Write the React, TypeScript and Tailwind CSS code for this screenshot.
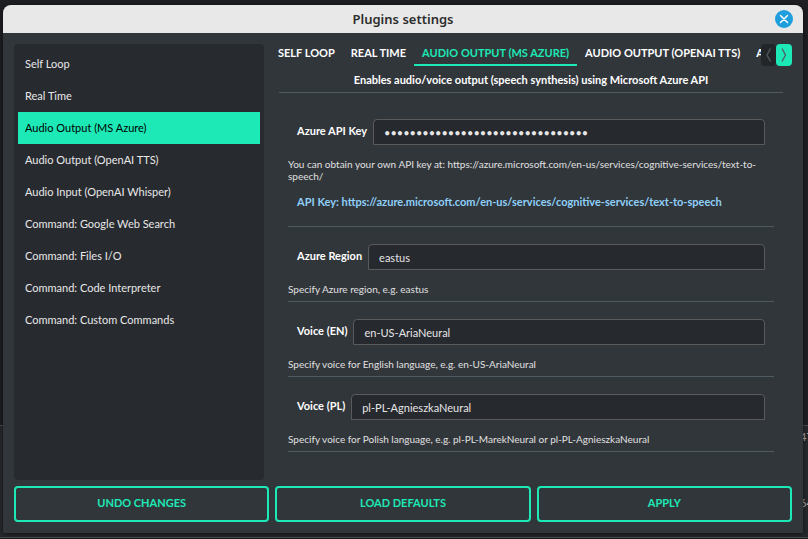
import React from "react";

const plugins = [
  "Self Loop",
  "Real Time",
  "Audio Output (MS Azure)",
  "Audio Output (OpenAI TTS)",
  "Audio Input (OpenAI Whisper)",
  "Command: Google Web Search",
  "Command: Files I/O",
  "Command: Code Interpreter",
  "Command: Custom Commands",
];

const selected = "Audio Output (MS Azure)";

type FieldProps = {
  id: string;
  label: string;
  value: string;
  hint: string;
  type?: string;
  children?: React.ReactNode;
};

function Field({ id, label, value, hint, type = "text", children }: FieldProps) {
  return (
    <section className="border-b border-[#4f5b62] pb-1.5">
      <div className="flex items-center gap-1.5 px-[9px] pt-[17px]">
        <label htmlFor={id} className="shrink-0 pb-0.5 font-bold">
          {label}
        </label>
        <input
          id={id}
          type={type}
          defaultValue={value}
          className="h-[26px] min-w-0 flex-1 rounded-t border border-[#5a5a5a] bg-[#26292e] px-2.5 text-[#e6e6e6] outline-none"
        />
      </div>
      <p className="pt-[13px] text-[10px] leading-3 text-[#e0e0e0]">{hint}</p>
      {children}
    </section>
  );
}

function Chevron({ d }: { d: string }) {
  return (
    <svg viewBox="0 0 16 22" className="h-[22px] w-4" fill="none" stroke="#4f5b62" strokeWidth="1.3">
      <path d={d} />
    </svg>
  );
}

export default function App() {
  return (
    <div className="relative h-screen overflow-hidden bg-[#1d1f22] font-['Lato',sans-serif] text-[11px] leading-4 text-white">
      <div className="flex h-full flex-col">
        <div className="flex-1" />
        <div className="flex h-[113px] flex-col items-end justify-between border-y border-[#4a4d50] bg-[#26292c] pt-[3px] pb-[26px] text-[#b0b0b0]">
          <span className="w-2">47</span>
          <span className="w-2">64</span>
        </div>
        <div className="h-px bg-[#1b1c1e]" />
      </div>

      <div
        role="dialog"
        aria-label="Plugins settings"
        className="absolute top-[5px] right-[5px] bottom-[6px] left-[3px] flex flex-col overflow-hidden rounded-t-lg bg-[#31363b] shadow-[0_1px_5px_rgba(0,0,0,0.6)]"
      >
        <header className="flex h-7 shrink-0 items-center bg-[#e8e8e8] pr-2.5 pl-7">
          <h1 className="flex-1 text-center font-['Noto_Sans',sans-serif] text-[13px] font-semibold text-[#2d2d2d]">
            Plugins settings
          </h1>
          <button aria-label="Close" className="flex size-[18px] items-center justify-center rounded-full bg-[#1f9ede]">
            <svg viewBox="0 0 18 18" className="size-[18px]" stroke="#fff" strokeWidth="1.5" strokeLinecap="round">
              <path d="M5.5 5.5l7 7M12.5 5.5l-7 7" />
            </svg>
          </button>
        </header>

        <main className="flex min-h-0 flex-1 flex-col gap-1.5 p-[11px]">
          <div className="flex min-h-0 flex-1 gap-1.5">
            <ul className="w-[250px] shrink-0 rounded bg-[#272a2f] p-1">
              {plugins.map((name) => (
                <li key={name}>
                  <button
                    className={
                      name === selected
                        ? "h-8 w-full bg-[#1de9b6] px-[7px] text-left text-black"
                        : "h-8 w-full px-[7px] text-left text-[#e8e8e8]"
                    }
                  >
                    {name}
                  </button>
                </li>
              ))}
            </ul>

            <div className="flex min-w-0 flex-1 flex-col">
              <div className="flex h-[22px] shrink-0">
                <nav className="flex min-w-0 flex-1 overflow-hidden font-bold whitespace-nowrap">
                  <button className="shrink-0 border-b-2 border-transparent px-2 pb-0.5">SELF LOOP</button>
                  <button className="shrink-0 border-b-2 border-transparent px-2 pb-0.5">REAL TIME</button>
                  <button className="shrink-0 border-b-2 border-[#1de9b6] px-2 pb-0.5 text-[#1de9b6]">
                    AUDIO OUTPUT (MS AZURE)
                  </button>
                  <button className="shrink-0 border-b-2 border-transparent px-2 pb-0.5">
                    AUDIO OUTPUT (OPENAI TTS)
                  </button>
                  <button className="shrink-0 border-b-2 border-transparent px-2 pb-0.5">
                    AUDIO INPUT (OPENAI WHISPER)
                  </button>
                </nav>
                <button aria-label="Previous tabs" className="w-[15px] overflow-hidden rounded bg-[#232629]">
                  <Chevron d="M9.5 4.5L6 11l3.5 6.5" />
                </button>
                <button aria-label="Next tabs" className="w-4 rounded bg-[#1de9b6]">
                  <Chevron d="M6 4.5L9.5 11 6 17.5" />
                </button>
              </div>

              <div className="px-[9px]">
                <p className="border-b border-[#4f5b62] pt-1.5 pb-1 text-center font-bold">
                  Enables audio/voice output (speech synthesis) using Microsoft Azure API
                </p>
                <div className="px-[9px] pt-[9px]">
                  <Field
                    id="api-key"
                    label="Azure API Key"
                    type="password"
                    value="0123456789abcdef0123456789abcdef"
                    hint="You can obtain your own API key at: https://azure.microsoft.com/en-us/services/cognitive-services/text-to-speech/"
                  >
                    <p className="px-[9px] pt-3 pb-2.5 font-bold">
                      <a
                        className="text-[#8fd0f8]"
                        href="https://azure.microsoft.com/en-us/services/cognitive-services/text-to-speech"
                      >
                        API Key: https://azure.microsoft.com/en-us/services/cognitive-services/text-to-speech
                      </a>
                    </p>
                  </Field>
                  <Field id="region" label="Azure Region" value="eastus" hint="Specify Azure region, e.g. eastus" />
                  <Field
                    id="voice-en"
                    label="Voice (EN)"
                    value="en-US-AriaNeural"
                    hint="Specify voice for English language, e.g. en-US-AriaNeural"
                  />
                  <Field
                    id="voice-pl"
                    label="Voice (PL)"
                    value="pl-PL-AgnieszkaNeural"
                    hint="Specify voice for Polish language, e.g. pl-PL-MarekNeural or pl-PL-AgnieszkaNeural"
                  />
                </div>
              </div>
            </div>
          </div>

          <footer className="flex gap-1.5 font-bold text-[#1de9b6]">
            <button className="h-9 flex-1 rounded border-2 border-[#1de9b6] pb-0.5">UNDO CHANGES</button>
            <button className="h-9 flex-1 rounded border-2 border-[#1de9b6] pb-0.5">LOAD DEFAULTS</button>
            <button className="h-9 flex-1 rounded border-2 border-[#1de9b6] pb-0.5">APPLY</button>
          </footer>
        </main>
      </div>
    </div>
  );
}
